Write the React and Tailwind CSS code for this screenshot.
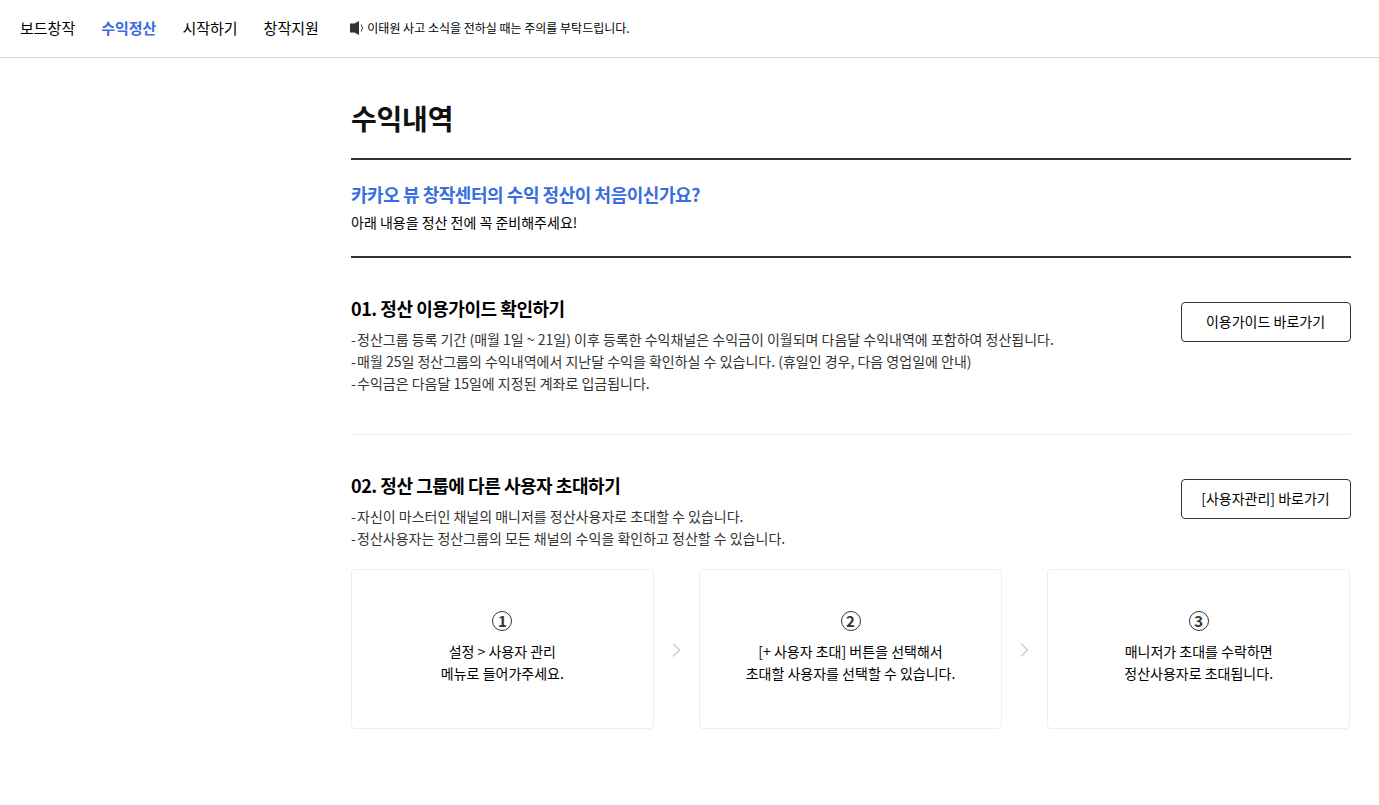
import React from "react";

const menus = [
  { name: "보드창작", active: false },
  { name: "수익정산", active: true },
  { name: "시작하기", active: false },
  { name: "창작지원", active: false },
];

const guides = [
  "정산그룹 등록 기간 (매월 1일 ~ 21일) 이후 등록한 수익채널은 수익금이 이월되며 다음달 수익내역에 포함하여 정산됩니다.",
  "매월 25일 정산그룹의 수익내역에서 지난달 수익을 확인하실 수 있습니다. (휴일인 경우, 다음 영업일에 안내)",
  "수익금은 다음달 15일에 지정된 계좌로 입금됩니다.",
];

const invites = [
  "자신이 마스터인 채널의 매니저를 정산사용자로 초대할 수 있습니다.",
  "정산사용자는 정산그룹의 모든 채널의 수익을 확인하고 정산할 수 있습니다.",
];

const steps = [
  ["설정 > 사용자 관리", "메뉴로 들어가주세요."],
  ["[+ 사용자 초대] 버튼을 선택해서", "초대할 사용자를 선택할 수 있습니다."],
  ["매니저가 초대를 수락하면", "정산사용자로 초대됩니다."],
];

const SpeakerIcon = () => (
  <svg width="14" height="14" viewBox="0 0 14 14" className="shrink-0">
    <path d="M0 2.500h4.500L9 0v14l-4.500-2.500H0z" fill="#333" />
    <path d="M11.200 3.500q2.600 3.500 0 7" fill="none" stroke="#333" strokeWidth="1" />
  </svg>
);

const ArrowIcon = () => (
  <svg width="9" height="16" viewBox="0 0 9 16" fill="none" stroke="#ccc" strokeWidth="1.400">
    <path d="M1 1.500 7.500 8 1 14.500" />
  </svg>
);

const Header = () => (
  <header className="flex h-[58px] items-center border-b border-[#d9d9d9] pl-5">
    <nav className="flex gap-[26px] text-[15px]">
      {menus.map((menu) => (
        <a key={menu.name} className={menu.active ? "font-bold text-[#3a6de0]" : ""}>
          {menu.name}
        </a>
      ))}
    </nav>
    <p className="ml-[31px] flex items-center gap-[3.500px] pb-0.5 text-xs">
      <SpeakerIcon />
      이태원 사고 소식을 전하실 때는 주의를 부탁드립니다.
    </p>
  </header>
);

const Section = ({ title, items, button }) => (
  <div className="flex items-start justify-between">
    <div>
      <h3 className="text-lg leading-[26px] font-bold tracking-[-0.46px]">{title}</h3>
      <ul className="mt-[7px] text-sm leading-[22px] text-[#333]">
        {items.map((item) => (
          <li key={item} className="flex">
            <span className="w-1.5">-</span>
            {item}
          </li>
        ))}
      </ul>
    </div>
    <button className="mt-[7px] h-10 w-[170px] rounded border border-[#333] pr-px pb-0.5 text-sm">{button}</button>
  </div>
);

const StepCard = ({ number, lines }) => (
  <div className="flex h-40 flex-1 flex-col items-center rounded border border-[#eee] pt-[41px]">
    <span className="flex size-5 items-center justify-center rounded-full border border-[#333] pb-px text-[15px] leading-none font-bold text-[#333]">
      {number}
    </span>
    <p className="mt-[9px] text-center text-sm leading-[22px]">
      {lines[0]}
      <br />
      {lines[1]}
    </p>
  </div>
);

const App = () => {
  return (
    <div className="min-h-screen bg-white font-['Noto_Sans_CJK_KR',sans-serif] whitespace-nowrap text-black">
      <Header />
      <main className="ml-[351px] w-[1000px] pt-[39px]">
        <h2 className="h-[61px] text-[28px] leading-[42px] font-bold tracking-[-0.2px] text-[#111]">수익내역</h2>
        <div className="h-[100px] border-y-2 border-[#333] pt-[21px]">
          <strong className="block text-lg leading-[26px] tracking-[-0.46px] text-[#3a6de0]">
            카카오 뷰 창작센터의 수익 정산이 처음이신가요?
          </strong>
          <p className="mt-1 text-sm leading-[22px]">아래 내용을 정산 전에 꼭 준비해주세요!</p>
        </div>
        <div className="h-[177px] border-b border-[#eee] pt-[37px]">
          <Section title="01. 정산 이용가이드 확인하기" items={guides} button="이용가이드 바로가기" />
        </div>
        <div className="pt-[37px]">
          <Section title="02. 정산 그룹에 다른 사용자 초대하기" items={invites} button="[사용자관리] 바로가기" />
          <div className="mt-5 flex w-[999px] items-center">
            {steps.map((lines, idx) => (
              <React.Fragment key={idx}>
                {idx > 0 && (
                  <div className="flex w-[45.5px] justify-center pt-px">
                    <ArrowIcon />
                  </div>
                )}
                <StepCard number={idx + 1} lines={lines} />
              </React.Fragment>
            ))}
          </div>
        </div>
      </main>
    </div>
  );
};

export default App;
